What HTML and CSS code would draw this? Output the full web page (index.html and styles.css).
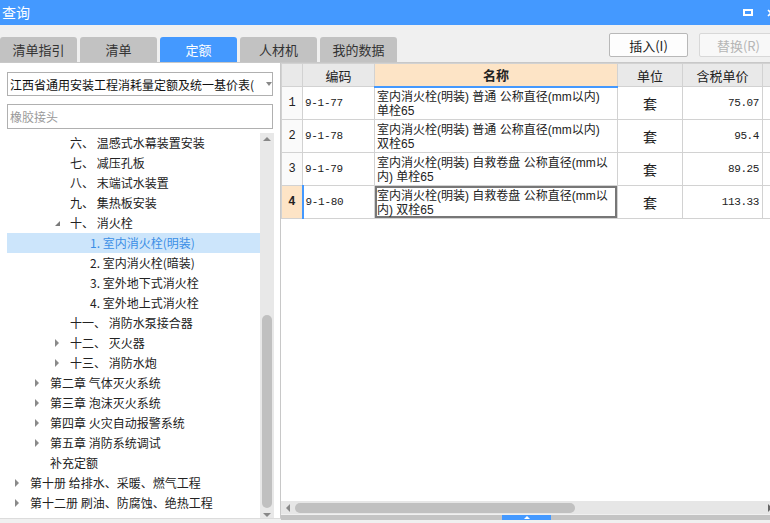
FILE: index.html
```html
<!DOCTYPE html>
<html lang="zh">
<head>
<meta charset="utf-8">
<title>查询</title>
<link rel="stylesheet" href="styles.css">
</head>
<body>
<div class="window">
  <div class="titlebar">
    <span class="title">查询</span>
    <span class="maxbtn"></span>
    <svg class="closebtn" width="8" height="8" viewBox="0 0 8 8"><path d="M1 1L7 7M7 1L1 7" stroke="#fff" stroke-width="1.6"/></svg>
  </div>
  <div class="toolbar">
    <div class="tabs">
      <div class="tab">清单指引</div>
      <div class="tab">清单</div>
      <div class="tab active">定额</div>
      <div class="tab">人材机</div>
      <div class="tab">我的数据</div>
    </div>
    <div class="actions">
      <button class="btn">插入(I)</button>
      <button class="btn disabled">替换(R)</button>
    </div>
  </div>
  <div class="main">
    <div class="left">
      <div class="select">
        <span class="select-text">江西省通用安装工程消耗量定额及统一基价表(</span>
        <span class="select-arrow"></span>
      </div>
      <div class="search">橡胶接头</div>
      <div class="treebox">
        <div class="tree">
          <div class="row l3"><span class="slot"></span>六、 温感式水幕装置安装</div>
          <div class="row l3"><span class="slot"></span>七、 减压孔板</div>
          <div class="row l3"><span class="slot"></span>八、 末端试水装置</div>
          <div class="row l3"><span class="slot"></span>九、 集热板安装</div>
          <div class="row l3"><span class="slot"><i class="tri-open"></i></span>十、 消火栓</div>
          <div class="row l4 selected"><span class="slot"></span>1. 室内消火栓(明装)</div>
          <div class="row l4"><span class="slot"></span>2. 室内消火栓(暗装)</div>
          <div class="row l4"><span class="slot"></span>3. 室外地下式消火栓</div>
          <div class="row l4"><span class="slot"></span>4. 室外地上式消火栓</div>
          <div class="row l3"><span class="slot"></span>十一、 消防水泵接合器</div>
          <div class="row l3"><span class="slot"><i class="tri-closed"></i></span>十二、 灭火器</div>
          <div class="row l3"><span class="slot"><i class="tri-closed"></i></span>十三、 消防水炮</div>
          <div class="row l2"><span class="slot"><i class="tri-closed"></i></span>第二章 气体灭火系统</div>
          <div class="row l2"><span class="slot"><i class="tri-closed"></i></span>第三章 泡沫灭火系统</div>
          <div class="row l2"><span class="slot"><i class="tri-closed"></i></span>第四章 火灾自动报警系统</div>
          <div class="row l2"><span class="slot"><i class="tri-closed"></i></span>第五章 消防系统调试</div>
          <div class="row l2"><span class="slot"></span>补充定额</div>
          <div class="row l1"><span class="slot"><i class="tri-closed"></i></span>第十册 给排水、采暖、燃气工程</div>
          <div class="row l1"><span class="slot"><i class="tri-closed"></i></span>第十二册 刷油、防腐蚀、绝热工程</div>
        </div>
        <div class="vscroll">
          <span class="arrow-up"></span>
          <div class="vtrack"><div class="vthumb"></div></div>
          <span class="arrow-down"></span>
        </div>
      </div>
    </div>
    <div class="right">
      <div class="grid-area">
        <table class="grid">
          <colgroup>
            <col class="c-no"><col class="c-code"><col class="c-name"><col class="c-unit"><col class="c-price"><col class="c-more">
          </colgroup>
          <thead>
            <tr>
              <th></th><th>编码</th><th class="h-name">名称</th><th>单位</th><th>含税单价</th><th></th>
            </tr>
          </thead>
          <tbody>
            <tr>
              <td class="no">1</td><td class="code">9-1-77</td>
              <td class="name">室内消火栓(明装) 普通 公称直径(mm以内)<br>单栓65</td>
              <td class="unit">套</td><td class="price">75.07</td><td></td>
            </tr>
            <tr>
              <td class="no">2</td><td class="code">9-1-78</td>
              <td class="name">室内消火栓(明装) 普通 公称直径(mm以内)<br>双栓65</td>
              <td class="unit">套</td><td class="price">95.4</td><td></td>
            </tr>
            <tr>
              <td class="no">3</td><td class="code">9-1-79</td>
              <td class="name">室内消火栓(明装) 自救卷盘 公称直径(mm以<br>内) 单栓65</td>
              <td class="unit">套</td><td class="price">89.25</td><td></td>
            </tr>
            <tr class="current">
              <td class="no">4</td><td class="code">9-1-80</td>
              <td class="name focus">室内消火栓(明装) 自救卷盘 公称直径(mm以<br>内) 双栓65</td>
              <td class="unit">套</td><td class="price">113.33</td><td></td>
            </tr>
          </tbody>
        </table>
      </div>
      <div class="hscroll">
        <span class="arrow-left"></span>
        <div class="htrack"><div class="hthumb"></div></div>
        <span class="arrow-right"></span>
      </div>
      <div class="splitbar"><span class="handle"><i></i></span></div>
    </div>
  </div>
</div>
</body>
</html>
```
FILE: styles.css
```css
* { box-sizing: border-box; }
html, body { margin: 0; padding: 0; }
body {
  font-family: "Noto Sans CJK SC", "Noto Sans", sans-serif;
  color: #222;
  background: #f0f0f0;
}
.window {
  width: 770px;
  height: 523px;
  overflow: hidden;
  background: #f0f0f0;
  display: flex;
  flex-direction: column;
}
.titlebar {
  height: 25px;
  flex: none;
  background: #4499ff;
  display: flex;
  align-items: center;
  padding-left: 2px;
}
.title {
  color: #fff;
  font-size: 14px;
  line-height: 25px;
  flex: 1;
}
.maxbtn {
  width: 10px;
  height: 7px;
  border: 2px solid #fff;
  margin-right: 14px;
}
.closebtn { margin-right: -5px; }

.toolbar {
  height: 38px;
  flex: none;
  display: flex;
  justify-content: space-between;
  border-bottom: 1px solid #c8c8c8;
}
.tabs {
  display: flex;
  align-items: flex-end;
  gap: 3px;
}
.tab {
  width: 77px;
  height: 25px;
  background: #c2c2c2;
  border-radius: 3px 3px 0 0;
  font-size: 13px;
  line-height: 25px;
  text-align: center;
  color: #333;
}
.tab.active { background: #4499ff; color: #fff; }
.actions {
  display: flex;
  gap: 11px;
  padding-top: 8px;
  margin-right: -8px;
  align-items: flex-start;
}
.btn {
  width: 79px;
  height: 24px;
  border: 1px solid #b8b8b8;
  border-radius: 2px;
  background: #fdfdfd;
  font-family: inherit;
  font-size: 13px;
  color: #222;
  padding: 0;
}
.btn.disabled { color: #b5b5b5; border-color: #d8d8d8; background: #f8f8f8; }

.main {
  flex: 1;
  display: flex;
  min-height: 0;
}
.left {
  width: 281px;
  flex: none;
  height: 456px;
  background: #fff;
  border-right: 1px solid #c8c8c8;
  border-bottom: 1px solid #dcdcdc;
  display: flex;
  flex-direction: column;
  padding: 9px 0 0 7px;
}
.select {
  width: 266px;
  height: 24px;
  border: 1px solid #b0b0b0;
  display: flex;
  align-items: center;
  padding-left: 2px;
  font-size: 12px;
}
.select-text {
  width: 250px;
  overflow: hidden;
  white-space: nowrap;
  color: #111;
}
.select-arrow {
  margin-left: 6px;
  border-top: 4px solid #888;
  border-left: 3.5px solid transparent;
  border-right: 3.5px solid transparent;
}
.search {
  margin-top: 8px;
  width: 266px;
  height: 25px;
  border: 1px solid #b0b0b0;
  font-size: 12px;
  line-height: 23px;
  padding-left: 2px;
  color: #9a9a9a;
}
.treebox {
  margin-top: 4px;
  display: flex;
  flex: 1;
  min-height: 0;
}
.tree {
  width: 253px;
  font-size: 12px;
  color: #222;
}
.row {
  height: 20px;
  line-height: 20px;
  display: flex;
  align-items: center;
  white-space: nowrap;
}
.row.selected { background: #cce5fb; color: #3a8ee6; }
.l1 { padding-left: 8px; }
.l2 { padding-left: 28px; }
.l3 { padding-left: 48px; }
.l4 { padding-left: 68px; }
.slot {
  width: 15px;
  height: 20px;
  flex: none;
  display: flex;
  align-items: center;
}
.tri-closed {
  display: block;
  border-left: 4px solid #8a8a8a;
  border-top: 4px solid transparent;
  border-bottom: 4px solid transparent;
}
.tri-open {
  display: block;
  margin-top: 1px;
  border-bottom: 5px solid #7a7a7a;
  border-left: 5px solid transparent;
}
.vscroll {
  width: 14px;
  background: #e8e8e8;
  display: flex;
  flex-direction: column;
  align-items: center;
}
.arrow-up {
  margin-top: 4px;
  border-bottom: 4px solid #888;
  border-left: 4px solid transparent;
  border-right: 4px solid transparent;
}
.vtrack {
  flex: 1;
  width: 100%;
  padding: 174px 2px 0 2px;
}
.vthumb {
  height: 193px;
  background: #c0c0c0;
  border-radius: 5px;
}
.arrow-down {
  margin: 5px 0 4px;
  border-top: 4px solid #888;
  border-left: 4px solid transparent;
  border-right: 4px solid transparent;
}

.right {
  flex: 1;
  min-width: 0;
  display: flex;
  flex-direction: column;
  height: 457px;
}
.grid-area {
  flex: 1;
  background: #fff;
  overflow: hidden;
}
.grid {
  border-collapse: collapse;
  table-layout: fixed;
  width: 520px;
  font-size: 13px;
}
.c-no { width: 21px; }
.c-code { width: 72px; }
.c-name { width: 243px; }
.c-unit { width: 65px; }
.c-price { width: 80px; }
.c-more { width: 39px; }
.grid th, .grid td {
  border: 1px solid #d2d2d2;
  padding: 0;
  overflow: hidden;
  white-space: nowrap;
}
.grid th {
  height: 23px;
  background: #e9e9e9;
  font-weight: normal;
  color: #222;
  text-align: center;
}
.grid th.h-name {
  background: #fde4c6;
  font-weight: bold;
  border-bottom: 2px solid #4499ff;
}
.grid td { height: 33px; }
.grid td.no {
  text-align: center;
  font-family: "Liberation Mono", monospace;
  font-size: 12px;
  background: #fafafa;
}
.grid td.code {
  font-family: "Liberation Mono", monospace;
  font-size: 11px;
  letter-spacing: -0.3px;
  padding-left: 2px;
}
.grid td.name {
  font-family: "Liberation Sans", "Noto Sans CJK SC", sans-serif;
  font-size: 12px;
  line-height: 14px;
  padding: 2px 0 0 2px;
}
.grid td.unit { text-align: center; font-size: 14px; }
.grid td.price {
  text-align: right;
  font-family: "Liberation Mono", monospace;
  font-size: 11px;
  letter-spacing: -0.4px;
  padding-right: 3px;
}
.grid tr.current td.no { background: #fde4c6; font-weight: bold; }
.grid tr.current td.code { border-left: 2px solid #4499ff; }
.grid td.focus { box-shadow: inset 0 0 0 2px #777; }

.hscroll {
  height: 13px;
  flex: none;
  background: #e6e6e6;
  display: flex;
  align-items: center;
  padding-left: 5px;
}
.arrow-left {
  border-right: 4px solid #888;
  border-top: 4px solid transparent;
  border-bottom: 4px solid transparent;
}
.htrack {
  flex: 1;
  height: 100%;
  padding: 2px 0 1px 5px;
}
.hthumb {
  width: 280px;
  height: 100%;
  background: #c0c0c0;
  border-radius: 5px;
}
.arrow-right {
  margin-right: -2px;
  border-left: 4px solid #666;
  border-top: 4px solid transparent;
  border-bottom: 4px solid transparent;
}
.splitbar {
  margin-top: 1px;
  height: 5px;
  flex: none;
  background: #c4c4c4;
  display: flex;
  justify-content: center;
  padding-left: 2px;
}
.handle {
  width: 49px;
  height: 5px;
  background: #4499ff;
  display: flex;
  justify-content: center;
  align-items: center;
}
.handle i {
  border-bottom: 3px solid #fff;
  border-left: 3px solid transparent;
  border-right: 3px solid transparent;
}
```
